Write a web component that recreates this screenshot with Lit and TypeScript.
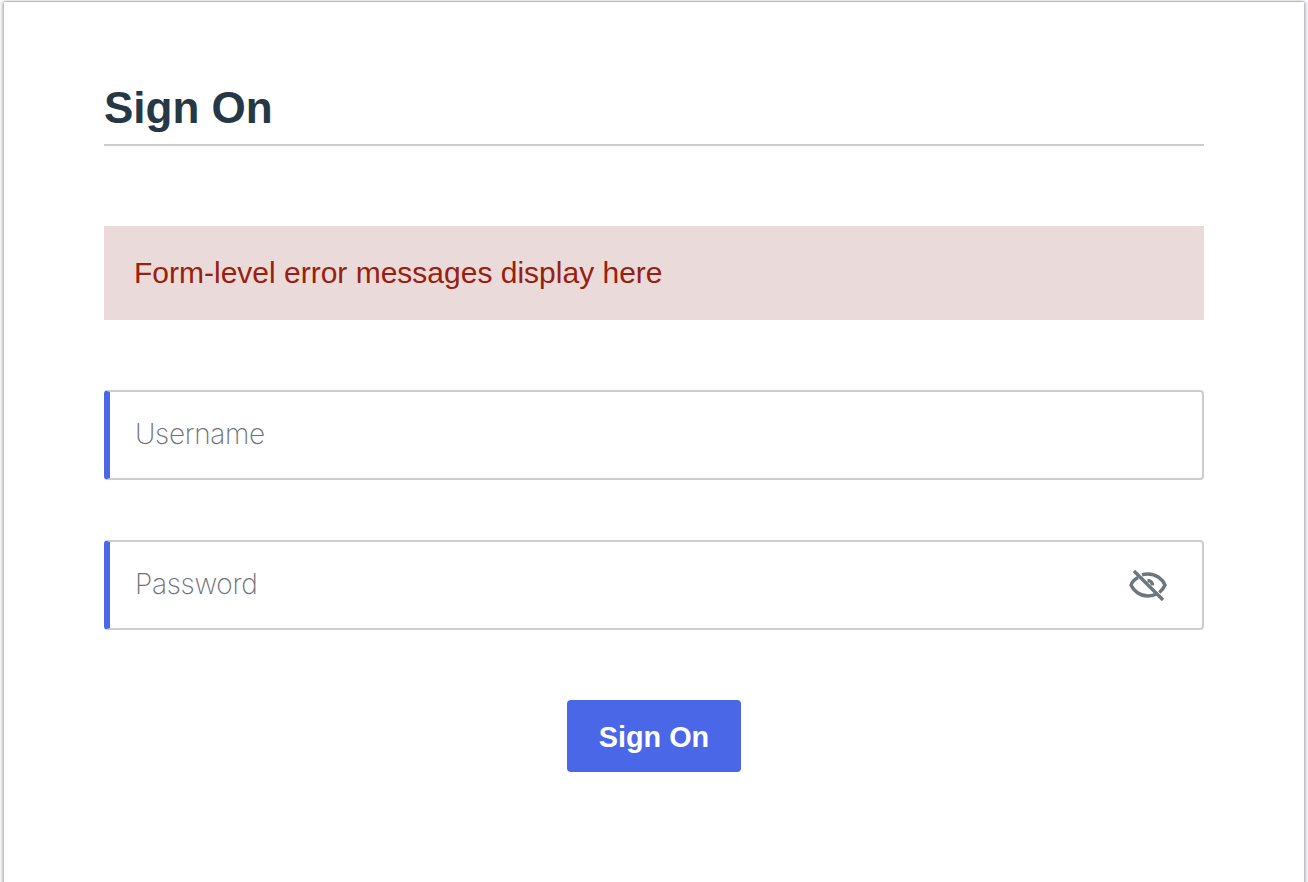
import { LitElement, html, css } from "lit";
import { customElement } from "lit/decorators.js";

@customElement("app-root")
export class AppRoot extends LitElement {
  static styles = css`
    :host {
      display: block;
      height: 882px;
      overflow: hidden;
      background: #fff;
      padding: 2px 4px 0;
      box-sizing: border-box;
      font-family: "Liberation Sans", Arial, sans-serif;
    }
    .card {
      height: 900px;
      background: #fff;
      box-shadow: -2px 0 3px rgba(80, 80, 100, 0.38), 2px 0 3px rgba(80, 80, 100, 0.38), 0 -1px 1px rgba(80, 80, 110, 0.18);
      padding: 80px 100px 0;
      box-sizing: border-box;
    }
    h1 {
      margin: 0;
      font-size: 44px;
      line-height: 52px;
      height: 64px;
      box-sizing: border-box;
      font-weight: 700;
      color: #263746;
      border-bottom: 2px solid #cbcdd1;
    }
    form {
      display: flex;
      flex-direction: column;
    }
    .error {
      margin-top: 80px;
      height: 94px;
      background: #ebdada;
      color: #98200e;
      font-size: 30px;
      display: flex;
      align-items: center;
      padding-left: 30px;
    }
    .field {
      display: flex;
      align-items: center;
      height: 90px;
      margin-top: 60px;
      box-sizing: border-box;
      border: 2px solid #cbcdd1;
      border-left: 6px solid #4a67e8;
      border-radius: 4px;
      background: #fff;
    }
    .error + .field {
      margin-top: 70px;
    }
    input {
      flex: 1;
      min-width: 0;
      height: 100%;
      border: 0;
      outline: 0;
      background: transparent;
      padding: 0 0 2px 25px;
      box-sizing: border-box;
      font-family: "Inter", "Liberation Sans", sans-serif;
      font-weight: 200;
      font-size: 28px;
      letter-spacing: -0.3px;
    }
    input::placeholder {
      color: #6f7179;
      opacity: 1;
    }
    .eye {
      display: block;
      width: 38px;
      height: 32px;
      margin-right: 35px;
      flex: none;
      color: #6d757d;
    }
    .actions {
      display: flex;
      justify-content: center;
      margin-top: 70px;
    }
    button {
      width: 174px;
      height: 72px;
      border: 0;
      border-radius: 4px;
      background: #4a67e8;
      color: #fff;
      font-family: inherit;
      font-size: 28.8px;
      font-weight: 700;
      padding: 2px 0 0;
    }
  `;

  render() {
    return html`
      <div class="card">
        <h1>Sign On</h1>
        <form @submit=${(e: Event) => e.preventDefault()}>
          <div class="error">Form-level error messages display here</div>
          <div class="field">
            <input type="text" placeholder="Username" />
          </div>
          <div class="field">
            <input type="password" placeholder="Password" />
            <svg class="eye" viewBox="0 0 38 32" fill="none" stroke="currentColor" stroke-width="3.400">
              <path d="M9 8.500C4.500 11 2.500 14.500 2 16c2.500 6 9 11 17 11 3.500 0 6.500-.9 9-2.200" />
              <path d="M13 5.800C15 5.200 17 5 19 5c8 0 14.500 5 17 11-1.200 3-3.200 5.500-5.700 7.500" />
              <path d="M5 2l29 29" />
              <path d="M18.500 11.500c2.700 0 4.800 2 5 4.800" />
            </svg>
          </div>
          <div class="actions"><button type="submit">Sign On</button></div>
        </form>
      </div>
    `;
  }
}
